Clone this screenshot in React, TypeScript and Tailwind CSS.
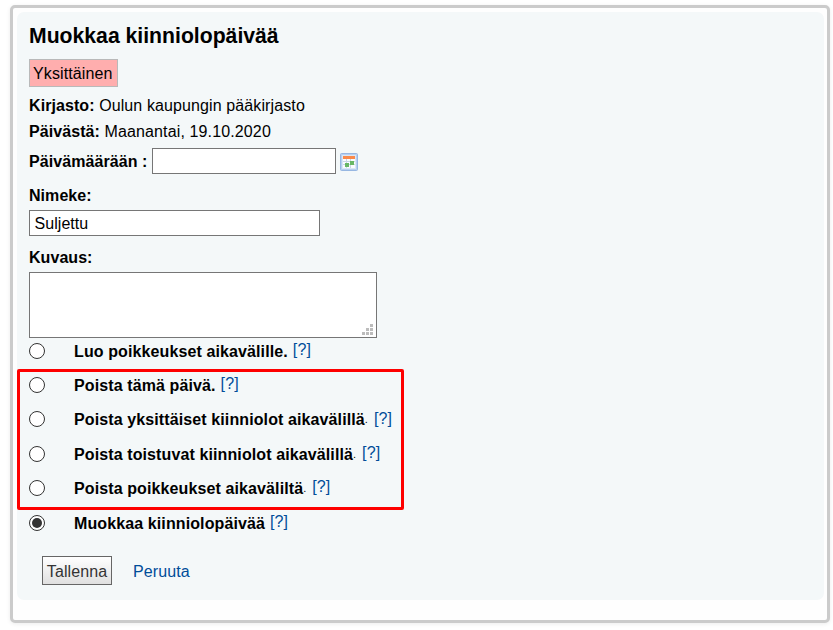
import React from "react";

type Option = { label: string; dot?: boolean; checked?: boolean; gap?: boolean; lowHelp?: boolean };

const deleteOptions: Option[] = [
  { label: "Poista tämä päivä." },
  { label: "Poista yksittäiset kiinniolot aikavälillä", dot: true, lowHelp: true },
  { label: "Poista toistuvat kiinniolot aikavälillä", dot: true, gap: true },
  { label: "Poista poikkeukset aikaväliltä", dot: true },
];

function Radio({ checked }: { checked?: boolean }) {
  return (
    <span className="flex size-4 shrink-0 items-center justify-center rounded-full border border-[#333] bg-white">
      {checked && <span className="size-[10px] rounded-full bg-[#333]" />}
    </span>
  );
}

function OptionRow({ label, dot, checked, gap, lowHelp }: Option) {
  return (
    <label className={`flex h-[34px] items-center whitespace-nowrap ${gap ? "mt-px" : ""}`}>
      <Radio checked={checked} />
      <span className="ml-[29px] pt-[2px] font-bold tracking-[0.11px]">{label}</span>
      {dot && <span className="pt-px text-[11px] leading-none">.</span>}
      <a className={`${dot ? "ml-[6px]" : "ml-[5px]"} ${lowHelp ? "" : "pb-[2px]"} tracking-[0.1px] text-[#004d99]`}>[?]</a>
    </label>
  );
}

function CalendarIcon() {
  return (
    <svg width="18" height="18" viewBox="0 0 18 18" className="ml-1 mt-[2px]">
      <rect x="0.5" y="0.5" width="17" height="17" rx="1" fill="#b8d0f0" stroke="#97b7e2" />
      <rect x="2" y="2" width="14" height="14" fill="#dbe7f6" />
      <rect x="3" y="6" width="12" height="9" fill="#fafcfe" />
      <rect x="3" y="3" width="12" height="3" fill="#fa8a4b" />
      <path d="M3 8.5h12M3 11.5h12M6.5 6v9M10.5 6v9" stroke="#c9d7e6" />
      <rect x="10" y="8" width="4" height="4" fill="#68b765" />
      <rect x="5" y="10" width="4" height="4" fill="#68b765" />
    </svg>
  );
}

function ResizeGrip() {
  return (
    <svg width="11" height="11" viewBox="0 0 11 11" fill="#bcbcbc">
      <path d="M8 0h3v3H8zM4 4h3v3H4zM8 4h3v3H8zM0 8h3v3H0zM4 8h3v3H4zM8 8h3v3H8z" />
    </svg>
  );
}

export default function App() {
  return (
    <div className="h-[630px] w-[833px] bg-white pl-[10px] pt-[5px] font-['Liberation_Sans',Arial,sans-serif] text-base leading-[18px] text-black">
      <div className="h-[618px] w-[820px] rounded-[5px] border-[3px] border-[#cbcbcb] bg-[#fefefe] p-1 shadow-[0_1px_4px_rgba(0,0,0,0.08)]">
        <form className="h-[588px] w-[807px] rounded-[7px] bg-[#f4f8f9] pl-3 pt-[10px]">
          <h3 className="h-[37px] whitespace-nowrap text-[21.2px] font-bold leading-7">Muokkaa kiinniolopäivää</h3>
          <div className="flex h-7 w-[89px] items-center border border-[#b9b9b9] bg-[#ffaeae] pl-[3px] pt-[2px] tracking-[0.12px]">Yksittäinen</div>
          <div className="mt-[5px] flex h-[26px] items-center pt-[2px] tracking-[0.11px]">
            <b className="mr-[4.5px] tracking-[0.08px]">Kirjasto:</b>Oulun kaupungin pääkirjasto
          </div>
          <div className="flex h-[26px] items-center pt-[2px] tracking-[0.13px]">
            <b className="mr-[4.5px] tracking-[0.08px]">Päivästä:</b>Maanantai, 19.10.2020
          </div>
          <div className="mt-1 flex h-[26px] items-center">
            <b className="w-[123px] whitespace-nowrap pt-[2px] tracking-[0.08px]">Päivämäärään :</b>
            <span className="h-[26px] w-[184px] border border-[#767676] bg-white" />
            <CalendarIcon />
          </div>
          <div className="mt-3 h-6 font-bold leading-[20px] tracking-[0.05px]">Nimeke:</div>
          <div className="flex h-[26px] w-[291px] items-center border border-[#767676] bg-white pl-[4.5px] pt-[2px] tracking-[0.05px]">Suljettu</div>
          <div className="mt-3 h-6 font-bold leading-[20px] tracking-[0.05px]">Kuvaus:</div>
          <div className="flex h-[66px] w-[348px] items-end justify-end border border-[#767676] bg-white p-[2px] pr-[3px]">
            <ResizeGrip />
          </div>
          <div className="-mt-1">
            <OptionRow label="Luo poikkeukset aikavälille." />
            <div className="relative">
              {deleteOptions.map((option) => (
                <OptionRow key={option.label} {...option} />
              ))}
              <span className="pointer-events-none absolute -left-3 top-px h-[141px] w-[387px] rounded-[2px] border-[3px] border-[#fe0000]" />
            </div>
            <OptionRow label="Muokkaa kiinniolopäivää" checked gap />
          </div>
          <div className="ml-[13px] mt-4 flex h-[29px] items-center tracking-[0.1px]">
            <button type="button" className="h-[29px] w-[70px] border border-[#666] bg-linear-to-b from-white to-[#e0e0e0] pt-[2px] text-center text-[#333]">
              Tallenna
            </button>
            <a className="ml-[21px] pt-[2px] text-[#004d99]">Peruuta</a>
          </div>
        </form>
      </div>
    </div>
  );
}
